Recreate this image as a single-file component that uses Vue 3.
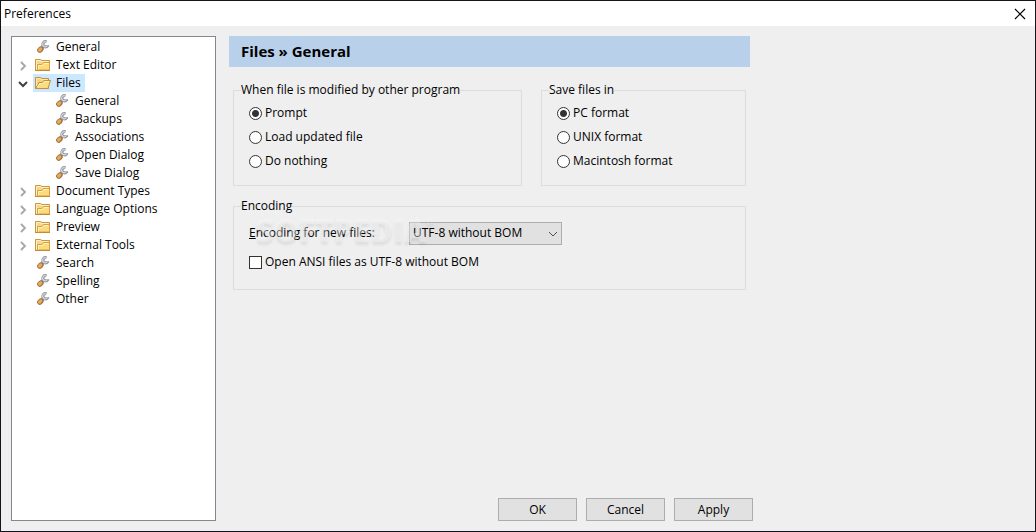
<script setup>
import { ref } from 'vue'

const tree = [
  { label: 'General', icon: 'tool', level: 0 },
  { label: 'Text Editor', icon: 'folder', level: 0, arrow: 'closed' },
  { label: 'Files', icon: 'open', level: 0, arrow: 'open', selected: true },
  { label: 'General', icon: 'tool', level: 1 },
  { label: 'Backups', icon: 'tool', level: 1 },
  { label: 'Associations', icon: 'tool', level: 1 },
  { label: 'Open Dialog', icon: 'tool', level: 1 },
  { label: 'Save Dialog', icon: 'tool', level: 1 },
  { label: 'Document Types', icon: 'folder', level: 0, arrow: 'closed' },
  { label: 'Language Options', icon: 'folder', level: 0, arrow: 'closed' },
  { label: 'Preview', icon: 'folder', level: 0, arrow: 'closed' },
  { label: 'External Tools', icon: 'folder', level: 0, arrow: 'closed' },
  { label: 'Search', icon: 'tool', level: 0 },
  { label: 'Spelling', icon: 'tool', level: 0 },
  { label: 'Other', icon: 'tool', level: 0 },
]
const modifiedOptions = ['Prompt', 'Load updated file', 'Do nothing']
const formatOptions = ['PC format', 'UNIX format', 'Macintosh format']
const modified = ref('Prompt')
const format = ref('PC format')
const encoding = ref('UTF-8 without BOM')
const openAnsi = ref(false)
</script>

<template>
  <div class="window">
    <header class="titlebar">
      <span>Preferences</span>
      <button class="close" type="button" aria-label="Close">
        <svg width="12" height="12" viewBox="0 0 12 12"><path d="M1 1l10 10M11 1L1 11" stroke="#000" stroke-width="1.2" fill="none" /></svg>
      </button>
    </header>

    <div class="body">
      <ul class="tree">
        <li v-for="(node, i) in tree" :key="i" class="node" :class="{ child: node.level === 1 }">
          <span class="arrow">
            <svg v-if="node.arrow === 'closed'" width="10" height="10" viewBox="0 0 10 10"><path d="M3 1l4 4-4 4" stroke="#a6a6a6" stroke-width="1.8" fill="none" /></svg>
            <svg v-if="node.arrow === 'open'" width="10" height="10" viewBox="0 0 10 10"><path d="M1 3l4 4 4-4" stroke="#404040" stroke-width="2" fill="none" /></svg>
          </span>
          <a class="entry" :class="{ selected: node.selected }" href="#">
            <svg v-if="node.icon === 'tool'" width="16" height="16" viewBox="0 0 16 16">
              <path d="M6.500 9L9 6.500" stroke="#8d929b" stroke-width="3.400" />
              <path d="M6.500 9L9 6.500" stroke="#dfe2e7" stroke-width="1.400" />
              <path d="M11.500 2.800A2.600 2.600 0 1 0 12.600 6.800L12.600 6.300" stroke="#8f949d" stroke-width="3" fill="none" />
              <path d="M11.300 3A2.500 2.500 0 1 0 12.300 6.500" stroke="#d3d7dc" stroke-width="1.200" fill="none" />
              <path d="M4.800 11.200L6 10" stroke="#a8743a" stroke-width="5.400" stroke-linecap="round" />
              <path d="M4.600 11L5.700 9.900" stroke="#e3ab62" stroke-width="3.200" stroke-linecap="round" />
            </svg>
            <svg v-else-if="node.icon === 'folder'" width="16" height="16" viewBox="0 0 16 16">
              <path d="M0.500 13.500V2.500H5.500L7 3.500H14.500V13.500Z" fill="#f5d590" stroke="#cc963d" />
              <path d="M1.500 12.500V3.500H5L6.500 4.500H13.500" fill="none" stroke="#fff0bd" />
              <path d="M2.500 13V7.500H7L8.500 5.500H14.500V13Z" fill="#fbdb7b" stroke="#d6a047" />
              <path d="M3.500 12.500V8.500H7.500L9 6.500H13.500" fill="none" stroke="#fff4b8" />
              <path d="M0 13.500H15" stroke="#c48a38" />
            </svg>
            <svg v-else width="16" height="16" viewBox="0 0 16 16">
              <path d="M0.500 13.500V2.500H5.500L7 3.500H13.500V13.500Z" fill="#f3cf88" stroke="#c98f37" />
              <path d="M1.500 11V3.500H5L6.500 4.500H12.500" fill="none" stroke="#ffebae" />
              <path d="M0.800 13.500L4 7.500H7.500L9 5.500H15.500L13 13.500Z" fill="#fbdc80" stroke="#c98f37" />
              <path d="M2.500 12L4.800 8.500H8L9.500 6.500H14" fill="none" stroke="#fff2b5" />
            </svg>
            <span class="caption">{{ node.label }}</span>
          </a>
        </li>
      </ul>

      <main class="main">
        <div class="panel">
          <h1 class="heading">Files » General</h1>
          <div class="groups">
            <div class="row">
              <fieldset class="group modified">
                <legend>When file is modified by other program</legend>
                <label v-for="o in modifiedOptions" :key="o" class="option">
                  <input v-model="modified" type="radio" name="modified" :value="o" />{{ o }}
                </label>
              </fieldset>
              <fieldset class="group format">
                <legend>Save files in</legend>
                <label v-for="o in formatOptions" :key="o" class="option">
                  <input v-model="format" type="radio" name="format" :value="o" />{{ o }}
                </label>
              </fieldset>
            </div>
            <fieldset class="group encoding">
              <legend>Encoding</legend>
              <div class="field">
                <label class="field-label" for="encoding"><u>E</u>ncoding for new files:</label>
                <span class="combo">
                  <select id="encoding" v-model="encoding">
                    <option>UTF-8 without BOM</option>
                  </select>
                  <svg width="10" height="6" viewBox="0 0 10 6"><path d="M1 1l4 4 4-4" stroke="#505050" fill="none" /></svg>
                </span>
              </div>
              <label class="option">
                <input v-model="openAnsi" type="checkbox" />Open ANSI files as UTF-8 without BOM
              </label>
              <div class="watermark">SOFTPEDIA<span class="mark">®</span></div>
            </fieldset>
          </div>
        </div>
        <footer class="actions">
          <button type="button">OK</button>
          <button type="button">Cancel</button>
          <button type="button">Apply</button>
        </footer>
      </main>
    </div>
  </div>
</template>

<style>
body {
  margin: 0;
}
</style>

<style scoped>
.window {
  box-sizing: border-box;
  min-height: 100vh;
  display: flex;
  flex-direction: column;
  border: 1px solid #16141a;
  background: #efefef;
  color: #000;
  font: 12px/18px "Open Sans", "Noto Sans", sans-serif;
}
.titlebar {
  display: flex;
  align-items: center;
  justify-content: space-between;
  height: 25px;
  padding: 0 9px 0 3px;
  background: #fff;
}
.close {
  display: flex;
  padding: 0;
  border: 0;
  background: none;
}
.body {
  flex: 1;
  display: flex;
  gap: 13px;
  padding: 10px;
}
.tree {
  box-sizing: border-box;
  flex: 0 0 205px;
  margin: 0;
  padding: 1px 0;
  border: 1px solid #828790;
  background: #fff;
  list-style: none;
}
.node {
  display: flex;
  height: 18px;
}
.child {
  padding-left: 19px;
}
.arrow {
  display: flex;
  align-items: center;
  width: 15px;
  padding: 2px 0 0 6px;
}
.entry {
  display: flex;
  align-items: center;
  gap: 3px;
  padding: 0 4px 0 2px;
  color: inherit;
  text-decoration: none;
}
.caption {
  padding-left: 2px;
}
.selected {
  background: #cce8ff;
}
.main {
  flex: 1;
  display: flex;
  flex-direction: column;
  justify-content: space-between;
  align-items: flex-start;
}
.heading {
  margin: 0;
  padding: 0 12px;
  background: #b9d0ea;
  font-size: 15px;
  line-height: 31px;
  font-weight: 700;
}
.groups {
  display: flex;
  flex-direction: column;
  gap: 11px;
  padding: 14px 4px 0;
}
.row {
  display: flex;
  gap: 19px;
}
.group {
  position: relative;
  box-sizing: border-box;
  min-width: 0;
  margin: 0;
  padding: 2px 15px 12px;
  border: 1px solid #dcdcdc;
}
.encoding {
  padding-top: 1px;
  padding-bottom: 15px;
}
legend {
  margin-left: -8px;
  padding: 0;
}
.modified {
  width: 289px;
}
.format {
  width: 205px;
}
.option {
  display: flex;
  align-items: center;
  gap: 3px;
  height: 24px;
}
.option input {
  appearance: none;
  box-sizing: border-box;
  flex: none;
  width: 13px;
  height: 13px;
  margin: 0;
  border: 1px solid #333;
  background: #fff;
}
.option input[type="radio"] {
  border-radius: 50%;
}
.option input[type="radio"]:checked {
  background: radial-gradient(circle, #333 3px, #fff 4px);
}
.field {
  display: flex;
  align-items: center;
  height: 34px;
}
.field-label {
  width: 160px;
}
.combo {
  position: relative;
  display: flex;
  width: 153px;
}
.combo select {
  appearance: none;
  width: 100%;
  height: 23px;
  margin: 0;
  padding: 0 20px 0 3px;
  border: 1px solid #adadad;
  border-radius: 0;
  background: #e1e1e1;
  color: #000;
  font: inherit;
}
.combo svg {
  position: absolute;
  right: 4px;
  top: 9px;
  pointer-events: none;
}
.watermark {
  position: absolute;
  left: 22px;
  top: -3px;
  display: flex;
  color: rgba(250, 250, 250, 0.4);
  font-size: 31px;
  line-height: 36px;
  font-weight: 800;
  text-shadow: 0 3px 3px rgba(0, 0, 0, 0.07);
  white-space: nowrap;
  pointer-events: none;
}
.mark {
  font-size: 9px;
  line-height: 18px;
}
.actions {
  display: flex;
  gap: 9px;
  padding-left: 269px;
}
.actions button {
  width: 79px;
  height: 23px;
  padding: 0;
  border: 1px solid #adadad;
  background: #e1e1e1;
  color: #000;
  font: inherit;
}
</style>
